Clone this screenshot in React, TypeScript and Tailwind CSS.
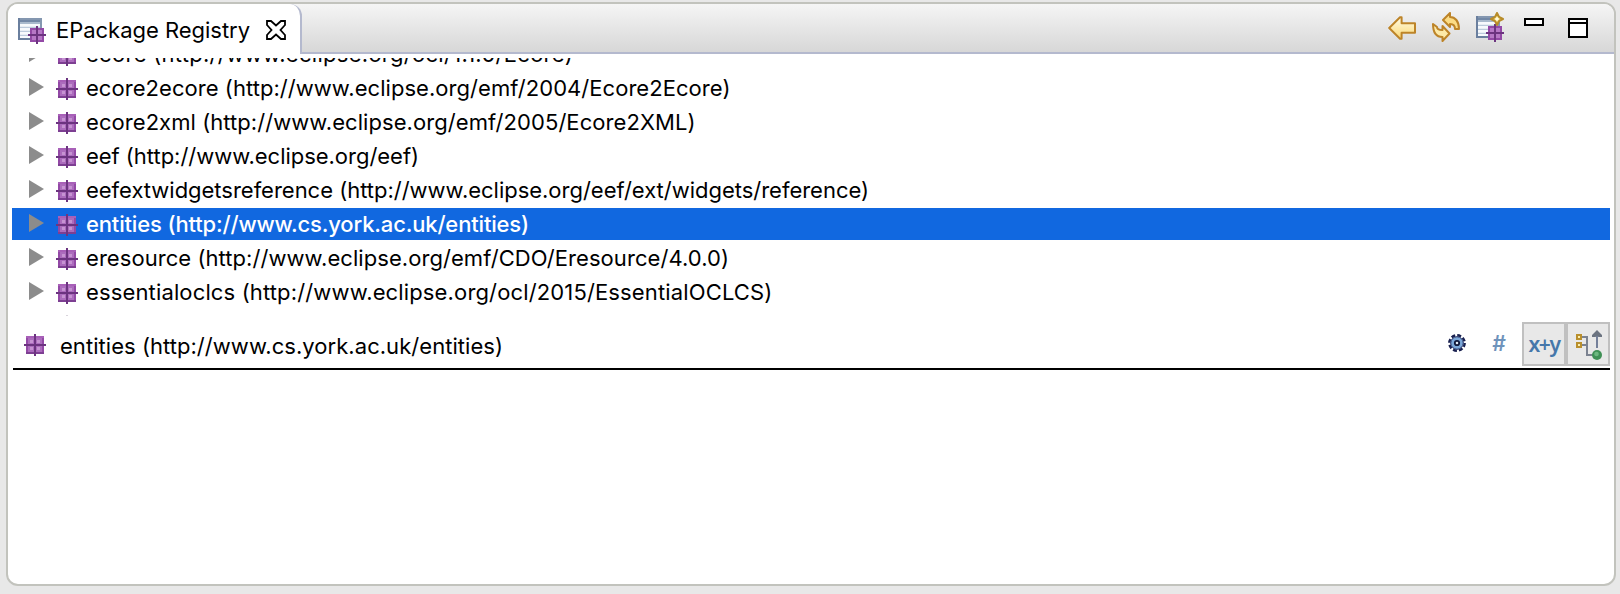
import React from "react";

const fontClass = "font-[Inter,'Liberation_Sans',sans-serif]";

type Entry = { label: string; width: number };

const entries: Entry[] = [
  { label: "ecore (http://www.eclipse.org/ocl/1.1.0/Ecore)", width: 487 },
  { label: "ecore2ecore (http://www.eclipse.org/emf/2004/Ecore2Ecore)", width: 644.5 },
  { label: "ecore2xml (http://www.eclipse.org/emf/2005/Ecore2XML)", width: 609.5 },
  { label: "eef (http://www.eclipse.org/eef)", width: 333 },
  { label: "eefextwidgetsreference (http://www.eclipse.org/eef/ext/widgets/reference)", width: 783 },
  { label: "entities (http://www.cs.york.ac.uk/entities)", width: 443 },
  { label: "eresource (http://www.eclipse.org/emf/CDO/Eresource/4.0.0)", width: 643 },
  { label: "essentialoclcs (http://www.eclipse.org/ocl/2015/EssentialOCLCS)", width: 686.5 },
];

function FitText({ label, width, className = "" }: Entry & { className?: string }) {
  const ref = React.useRef<HTMLSpanElement>(null);
  const [spacing, setSpacing] = React.useState(0);
  React.useLayoutEffect(() => {
    const el = ref.current;
    if (el) setSpacing((width - el.getBoundingClientRect().width) / label.length);
  }, [label, width]);
  return (
    <span ref={ref} className={`shrink-0 whitespace-pre ${className}`} style={{ letterSpacing: `${spacing}px` }}>
      {label}
    </span>
  );
}

function PackageShape() {
  return (
    <g>
      <rect x="1" y="1" width="9" height="9" fill="#9349a6" />
      <path d="M1 1h9v1H1z" fill="#a860b8" />
      <path d="M1 9h9v1H1z" fill="#7d3f92" />
      <path d="M2 2h3v3H2zM6 2h3v3H6zM2 6h3v3H2zM6 6h3v3H6z" fill="#ac6cbd" />
      <path d="M3 3h1.5v1.5H3zM6.5 3H8v1.5H6.500zM3 6.500h1.500V8H3zM6.500 6.500H8V8H6.500z" fill="#c693d2" />
      <path d="M5 0h1v11H5zM0 5h11v1H0z" fill="#6c3480" />
    </g>
  );
}

function PackageIcon({ className = "" }: { className?: string }) {
  return (
    <svg viewBox="0 0 11 11" className={`h-[22px] w-[22px] shrink-0 ${className}`}>
      <PackageShape />
    </svg>
  );
}

function SmallPackage({ x, y }: { x: number; y: number }) {
  return (
    <g transform={`translate(${x} ${y})`}>
      <rect x="1" y="1" width="7" height="7" fill="#9349a6" />
      <path d="M2 2h2v2H2zM5 2h2v2H5zM2 5h2v2H2zM5 5h2v2H5z" fill="#b678c6" />
      <path d="M4 0h1v9H4zM0 4h9v1H0z" fill="#6c3480" />
    </g>
  );
}

function TableShape() {
  return (
    <g>
      <rect x="0" y="0" width="12" height="11" fill="#8497b0" />
      <path d="M0 0h1v11H0zM0 10h12v1H0z" fill="#6a7f9e" />
      <rect x="1" y="1" width="10" height="1" fill="#7288a6" />
      <rect x="1" y="2" width="10" height="1" fill="#a9bacd" />
      <rect x="1" y="3" width="10" height="7" fill="#f7fafd" />
      <path d="M1 4.400h10v.6H1zM1 6.400h10v.6H1zM1 8.400h10v.6H1z" fill="#bccbdc" />
    </g>
  );
}

function RegistryIcon() {
  return (
    <svg viewBox="0 0 14 13" className="h-[26px] w-7 shrink-0">
      <TableShape />
      <SmallPackage x={5} y={4} />
    </svg>
  );
}

function NewRegistryIcon() {
  return (
    <svg viewBox="0 0 14 15" className="h-[30px] w-7 shrink-0">
      <g transform="translate(0 2)"><TableShape /></g>
      <SmallPackage x={5} y={6} />
      <path d="M10.500.5l1 2 2 1-2 1-1 2-1-2-2-1 2-1z" fill="#f7e07c" stroke="#b88c2a" strokeWidth="1" strokeLinejoin="round" />
      <circle cx="10.500" cy="3.500" r=".9" fill="#fffbe0" />
    </svg>
  );
}

function BackIcon() {
  return (
    <svg viewBox="0 0 28 26" className="h-[26px] w-7 shrink-0">
      <defs>
        <linearGradient id="gold" x1="0" y1="0" x2="0" y2="1">
          <stop offset="0" stopColor="#fffbe6" />
          <stop offset="1" stopColor="#fbd873" />
        </linearGradient>
      </defs>
      <path d="M1.200 13L12 2.200h1.600v6H27v9.600H13.600v6H12z" fill="url(#gold)" stroke="#bd8428" strokeWidth="2" strokeLinejoin="round" />
    </svg>
  );
}

function RefreshIcon() {
  return (
    <svg viewBox="0 0 28 30" className="h-[30px] w-7 shrink-0">
      <path d="M11 8L18 1v4c5 0 9 4 9 12l-4 0c0-3-2-5-5-5v3z" fill="#fbdc85" stroke="#bd8428" strokeWidth="2" strokeLinejoin="round" />
      <path d="M17.500 21.500L10.500 29v-4C5 25 1 22 1 12l4 3c0 2 2 3 5.500 3v-4z" fill="#fdeaa8" stroke="#bd8428" strokeWidth="2" strokeLinejoin="round" />
    </svg>
  );
}

function CloseIcon() {
  return (
    <svg viewBox="0 0 20 20" className="h-5 w-5 shrink-0">
      <path d="M1 1h4l5 4.500L15 1h4v4l-4.500 5 4.500 5v4h-4l-5-4.500L5 19H1v-4l4.500-5L1 5z" fill="#fff" stroke="#000" strokeWidth="1.800" />
    </svg>
  );
}

function GearIcon() {
  return (
    <svg viewBox="0 0 18 18" className="h-[18px] w-[18px] shrink-0">
      <circle cx="9" cy="9" r="7.700" fill="none" stroke="#1a2150" strokeWidth="2.400" strokeDasharray="4 2.048" />
      <circle cx="9" cy="9" r="6.300" fill="#7ba7d8" stroke="#1f2c60" strokeWidth="1" />
      <circle cx="9" cy="9" r="2.200" fill="#e4eef8" stroke="#10183a" strokeWidth="1.800" />
    </svg>
  );
}

function TreeIcon() {
  return (
    <svg viewBox="0 0 26 30" className="h-[30px] w-[26px] shrink-0">
      <path d="M6 7h5v18h6M6 15h5" fill="none" stroke="#7b8290" strokeWidth="2" />
      <path d="M21 4v14" stroke="#74809a" strokeWidth="2" />
      <path d="M21 0l5 5v2h-3.500L21 5.500 19.500 7H16V5z" fill="#6b7380" />
      <path d="M1 5h4v4H1zM1 13h4v4H1z" fill="#fbeeb0" stroke="#b98f2c" strokeWidth="2" />
      <circle cx="21" cy="25" r="5" fill="#3f9055" />
      <circle cx="20.500" cy="24" r="2.300" fill="#6db880" />
    </svg>
  );
}

function Row({ entry, selected }: { entry: Entry; selected: boolean }) {
  return (
    <div className={`flex h-8 shrink-0 items-center pl-[17px] ${selected ? "bg-[#1168e0] font-medium text-white" : "text-black"}`}>
      <svg viewBox="0 0 15 18" className="mb-[2px] h-[18px] w-[15px] shrink-0">
        <path d="M0 0l15 9-15 9z" fill="#8c8c8c" />
      </svg>
      <PackageIcon className="mt-[2px] ml-3" />
      <FitText {...entry} className="ml-2 leading-8" />
    </div>
  );
}

export default function App() {
  return (
    <div className={`h-[594px] w-[1620px] overflow-hidden bg-[#e8e8e8] pt-[2px] pl-[6px] text-[22px] text-black ${fontClass}`}>
      <div className="flex h-[584px] w-[1610px] flex-col overflow-hidden rounded-[12px] border-2 border-[#c2c3bd] bg-white">
        <div className="flex h-[50px] shrink-0 bg-linear-to-b from-[#f5f5f5] to-[#d6d6d6]">
          <div className="flex w-[294px] items-start rounded-tr-[12px] border-r-2 border-[#b4b9ce] bg-white pl-[10px]">
            <div className="mt-[14px]"><RegistryIcon /></div>
            <FitText label="EPackage Registry" width={194} className="mt-[10px] ml-[10px] leading-8" />
            <div className="mt-4 ml-4"><CloseIcon /></div>
          </div>
          <div className="flex flex-1 items-start justify-end border-b-2 border-[#b4b9ce] pr-[26px]">
            <div className="mt-[11px]"><BackIcon /></div>
            <div className="mt-2 ml-4"><RefreshIcon /></div>
            <div className="mt-2 ml-4"><NewRegistryIcon /></div>
            <div className="mt-[14px] ml-5 h-2 w-5 border-2 border-black bg-white" />
            <div className="mt-[14px] ml-6 h-5 w-5 border-2 border-black bg-white pt-[2px]">
              <div className="h-[2px] bg-black" />
            </div>
          </div>
        </div>
        <div className="mx-1 mt-1 h-[258px] shrink-0 overflow-hidden">
          <div className="-mt-5 flex flex-col gap-[2px]">
            {entries.map((entry, i) => (
              <Row key={entry.label} entry={entry} selected={i === 5} />
            ))}
            <div className="mt-[5px] ml-[54px] h-px w-[2px] bg-[#d9d4dc]" />
          </div>
        </div>
        <div className="mr-1 ml-[5px] flex h-[54px] shrink-0 items-start border-b-2 border-black pt-[6px] pl-[11px]">
          <PackageIcon className="mt-3" />
          <FitText label="entities (http://www.cs.york.ac.uk/entities)" width={443} className="mt-2 ml-[14px] leading-8" />
          <div className="ml-auto flex items-start">
            <div className="mt-3"><GearIcon /></div>
            <div className="ml-[26px] w-[16px] pt-[9px] text-[21px] leading-[26px] font-semibold text-[#6f93bb] italic">#</div>
            <div className="ml-[14px] flex h-11 w-11 items-center justify-center border-2 border-[#c0c0c0] bg-[#e8e8e8]">
              <FitText label="x+y" width={31} className="font-['Noto_Sans',sans-serif] text-[21px] leading-8 font-semibold text-[#4577aa]" />
            </div>
            <div className="flex h-11 w-11 items-start justify-center border-2 border-[#c0c0c0] bg-[#e8e8e8] pt-[6px] pl-[2px]">
              <TreeIcon />
            </div>
          </div>
        </div>
      </div>
    </div>
  );
}
